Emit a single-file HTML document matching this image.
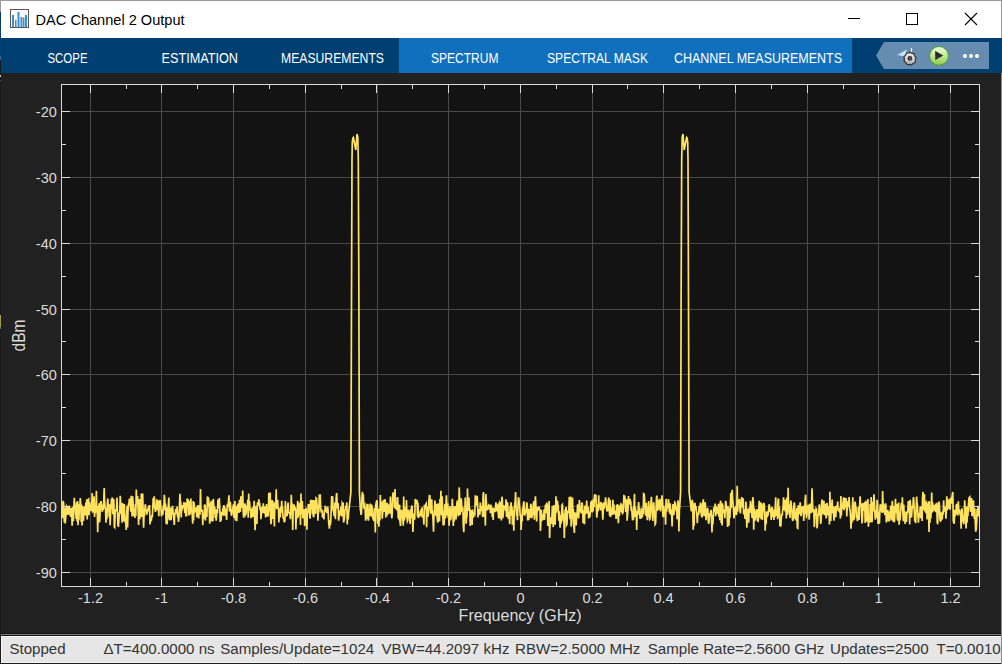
<!DOCTYPE html>
<html><head><meta charset="utf-8"><style>
html,body{margin:0;padding:0;width:1002px;height:664px;overflow:hidden;background:#212121;font-family:"Liberation Sans",sans-serif}
</style></head><body>
<svg width="1002" height="664" viewBox="0 0 1002 664" style="position:absolute;left:0;top:0">
<rect x="0" y="0" width="1002" height="664" fill="#212121"/>
<!-- title bar -->
<rect x="0" y="0" width="1002" height="38" fill="#ffffff"/>
<rect x="0" y="0" width="1002" height="1" fill="#9b9b9b"/>
<!-- icon -->
<rect x="10.5" y="9.5" width="18" height="18" fill="#fafafa" stroke="#5a5a5a" stroke-width="1"/>
<g fill="#3f8fd2"><rect x="12" y="15" width="2" height="12"/><rect x="15" y="20" width="1.5" height="7"/><rect x="17.5" y="12" width="2" height="15"/><rect x="20.5" y="17" width="2" height="10"/><rect x="23" y="17.5" width="1.5" height="9.5"/><rect x="25" y="15" width="2" height="12"/></g>
<text x="35.6" y="24.7" font-family="Liberation Sans" font-size="15" fill="#000" textLength="149" lengthAdjust="spacingAndGlyphs">DAC Channel 2 Output</text>
<!-- window buttons -->
<path d="M848 18.5H860" stroke="#000" stroke-width="1"/>
<rect x="906.5" y="13.5" width="11" height="11" fill="none" stroke="#000" stroke-width="1"/>
<path d="M965 13L977 25M977 13L965 25" stroke="#000" stroke-width="1.1"/>
<!-- toolstrip -->
<rect x="0" y="38" width="1002" height="35" fill="#003f72"/>
<rect x="399" y="38" width="453" height="35" fill="#1170be"/>
<g font-family="Liberation Sans" font-size="14" fill="#ffffff">
<text x="47.5" y="63" textLength="40" lengthAdjust="spacingAndGlyphs">SCOPE</text>
<text x="161.5" y="63" textLength="76.5" lengthAdjust="spacingAndGlyphs">ESTIMATION</text>
<text x="281" y="63" textLength="103" lengthAdjust="spacingAndGlyphs">MEASUREMENTS</text>
<text x="431" y="63" textLength="67.5" lengthAdjust="spacingAndGlyphs">SPECTRUM</text>
<text x="547" y="63" textLength="101" lengthAdjust="spacingAndGlyphs">SPECTRAL MASK</text>
<text x="674" y="63" textLength="168" lengthAdjust="spacingAndGlyphs">CHANNEL MEASUREMENTS</text>
</g>
<!-- toolbar panel -->
<path d="M876 55.5L884 42H989V69H884Z" fill="#668cb0"/>
<!-- gear -->
<defs>
<linearGradient id="gg" x1="0" y1="0" x2="0" y2="1"><stop offset="0" stop-color="#f0f0f0"/><stop offset="1" stop-color="#b0b0b0"/></linearGradient>
<linearGradient id="pg" x1="0" y1="0" x2="0" y2="1"><stop offset="0" stop-color="#eefbe2"/><stop offset="0.45" stop-color="#c8ec9a"/><stop offset="1" stop-color="#8ccc48"/></linearGradient>
<linearGradient id="tg" x1="0" y1="0" x2="0" y2="1"><stop offset="0" stop-color="#1e1e1e"/><stop offset="1" stop-color="#3c3c3c"/></linearGradient>
</defs>
<path d="M897.2 55L906.8 49.6L905 56.4Z" fill="#c4e2f6"/>
<path d="M911.5 48V52" stroke="#eaf4fc" stroke-width="1.2"/>
<g transform="translate(909.9 58.4)">
<path d="M0 -6.2L1.6 -5.2L3.9 -4.8L4.6 -2.6L6.1 -0.8L5.4 1.5L5.5 3.8L3.4 4.8L1.7 6.4L-0.6 5.9L-2.8 6.3L-4 4.3L-5.8 2.9L-5.5 0.6L-6 -1.7L-4.3 -3.2L-3.2 -5.4L-0.9 -5.6Z" fill="url(#gg)" stroke="#333" stroke-width="1.2"/>
<circle r="2.3" fill="#2e2e2e"/><circle r="1" fill="#5d6f82"/>
</g>
<!-- play -->
<g transform="translate(939 55.9)">
<circle r="9.4" fill="url(#pg)" stroke="#4f9a2c" stroke-width="1"/>
<path d="M-3.8 -5L4.3 -0.3L-3.8 4.4Z" fill="url(#tg)"/>
</g>
<g fill="#ffffff"><circle cx="965" cy="56" r="2"/><circle cx="971" cy="56" r="2"/><circle cx="977" cy="56" r="2"/></g>
<!-- axes -->
<rect x="61" y="84" width="919" height="503" fill="#131313"/>
<path d="M90.5 84V586M161.5 84V586M233.5 84V586M305.5 84V586M377.5 84V586M448.5 84V586M520.5 84V586M592.5 84V586M663.5 84V586M735.5 84V586M807.5 84V586M878.5 84V586M950.5 84V586M61 111.5H979M61 177.5H979M61 243.5H979M61 309.5H979M61 374.5H979M61 440.5H979M61 506.5H979M61 572.5H979" stroke="#4a4a4a" stroke-width="1" fill="none"/>
<path d="M61.5 512.3 L62.0 512.5 L62.4 518.1 L62.9 502.7 L63.3 500.9 L63.8 505.7 L64.3 522.5 L64.7 507.8 L65.2 523.4 L65.6 519.5 L66.1 509.4 L66.5 506.4 L67.0 507.5 L67.5 514.9 L67.9 506.1 L68.4 514.3 L68.8 513.4 L69.3 505.5 L69.8 513.1 L70.2 514.5 L70.7 516.9 L71.1 508.0 L71.6 509.2 L72.1 525.8 L72.5 513.5 L73.0 506.8 L73.4 521.1 L73.9 506.2 L74.3 497.8 L74.8 507.4 L75.3 505.0 L75.7 513.4 L76.2 518.8 L76.6 502.3 L77.1 521.4 L77.6 501.1 L78.0 525.2 L78.5 511.0 L78.9 520.3 L79.4 504.1 L79.8 508.3 L80.3 498.1 L80.8 505.0 L81.2 522.1 L81.7 504.7 L82.1 525.4 L82.6 506.7 L83.1 511.7 L83.5 520.9 L84.0 507.7 L84.4 507.3 L84.9 508.6 L85.4 515.1 L85.8 502.6 L86.3 515.7 L86.7 499.3 L87.2 519.4 L87.6 512.7 L88.1 499.7 L88.6 499.2 L89.0 515.1 L89.5 502.1 L89.9 506.3 L90.4 508.4 L90.9 511.2 L91.3 505.7 L91.8 503.3 L92.2 493.0 L92.7 510.8 L93.2 510.0 L93.6 512.4 L94.1 496.2 L94.5 517.1 L95.0 508.1 L95.4 513.2 L95.9 508.4 L96.4 490.7 L96.8 511.6 L97.3 512.2 L97.7 532.2 L98.2 505.9 L98.7 510.2 L99.1 503.2 L99.6 522.5 L100.0 514.5 L100.5 502.7 L101.0 501.2 L101.4 504.5 L101.9 508.6 L102.3 511.8 L102.8 504.8 L103.2 510.3 L103.7 502.3 L104.2 488.0 L104.6 500.3 L105.1 508.1 L105.5 508.5 L106.0 522.7 L106.5 508.1 L106.9 519.3 L107.4 502.5 L107.8 498.6 L108.3 509.9 L108.7 505.1 L109.2 517.1 L109.7 504.2 L110.1 525.2 L110.6 513.8 L111.0 508.0 L111.5 498.7 L112.0 499.8 L112.4 497.5 L112.9 514.3 L113.3 510.0 L113.8 499.1 L114.3 526.9 L114.7 527.4 L115.2 510.5 L115.6 510.3 L116.1 509.3 L116.5 510.0 L117.0 497.5 L117.5 512.5 L117.9 524.7 L118.4 526.9 L118.8 521.5 L119.3 512.5 L119.8 514.3 L120.2 495.7 L120.7 502.7 L121.1 509.9 L121.6 513.4 L122.1 522.8 L122.5 503.1 L123.0 507.8 L123.4 507.7 L123.9 521.5 L124.3 504.0 L124.8 516.0 L125.3 522.8 L125.7 521.0 L126.2 530.0 L126.6 518.3 L127.1 505.7 L127.6 527.4 L128.0 510.8 L128.5 504.2 L128.9 504.1 L129.4 498.6 L129.9 505.4 L130.3 502.4 L130.8 511.6 L131.2 495.8 L131.7 504.3 L132.1 516.5 L132.6 496.2 L133.1 503.4 L133.5 516.1 L134.0 508.3 L134.4 509.9 L134.9 517.9 L135.4 504.0 L135.8 516.0 L136.3 489.6 L136.7 502.4 L137.2 504.3 L137.6 496.0 L138.1 508.5 L138.6 525.0 L139.0 509.8 L139.5 499.1 L139.9 519.3 L140.4 508.9 L140.9 513.0 L141.3 493.5 L141.8 517.1 L142.2 497.5 L142.7 493.4 L143.2 514.1 L143.6 527.6 L144.1 512.8 L144.5 516.0 L145.0 507.0 L145.4 504.2 L145.9 511.2 L146.4 509.5 L146.8 514.6 L147.3 511.3 L147.7 509.9 L148.2 511.1 L148.7 506.5 L149.1 505.9 L149.6 505.9 L150.0 524.4 L150.5 519.4 L151.0 520.5 L151.4 519.9 L151.9 515.0 L152.3 517.1 L152.8 507.4 L153.2 498.0 L153.7 508.3 L154.2 496.4 L154.6 499.9 L155.1 509.5 L155.5 511.9 L156.0 505.0 L156.5 509.7 L156.9 499.2 L157.4 506.0 L157.8 510.4 L158.3 500.6 L158.8 516.1 L159.2 506.1 L159.7 501.4 L160.1 500.0 L160.6 505.0 L161.0 509.1 L161.5 516.4 L162.0 509.5 L162.4 512.5 L162.9 514.7 L163.3 505.2 L163.8 510.5 L164.3 494.8 L164.7 498.6 L165.2 509.7 L165.6 503.4 L166.1 523.7 L166.5 507.3 L167.0 524.4 L167.5 517.9 L167.9 511.5 L168.4 505.6 L168.8 497.6 L169.3 518.8 L169.8 520.3 L170.2 512.7 L170.7 507.5 L171.1 520.3 L171.6 514.1 L172.1 512.2 L172.5 505.8 L173.0 511.2 L173.4 513.4 L173.9 520.0 L174.3 525.0 L174.8 513.1 L175.3 514.4 L175.7 508.8 L176.2 512.1 L176.6 513.4 L177.1 506.5 L177.6 517.3 L178.0 516.3 L178.5 522.0 L178.9 517.8 L179.4 509.3 L179.9 493.8 L180.3 501.0 L180.8 502.6 L181.2 517.4 L181.7 508.3 L182.1 508.8 L182.6 505.2 L183.1 506.7 L183.5 507.2 L184.0 502.2 L184.4 508.2 L184.9 512.9 L185.4 502.6 L185.8 516.5 L186.3 507.4 L186.7 516.3 L187.2 498.4 L187.7 506.9 L188.1 499.3 L188.6 504.1 L189.0 515.4 L189.5 501.1 L189.9 514.6 L190.4 511.6 L190.9 498.5 L191.3 512.1 L191.8 509.9 L192.2 514.8 L192.7 523.7 L193.2 500.9 L193.6 520.5 L194.1 502.4 L194.5 509.5 L195.0 511.3 L195.4 510.8 L195.9 511.3 L196.4 507.2 L196.8 517.3 L197.3 515.1 L197.7 505.0 L198.2 513.5 L198.7 518.5 L199.1 509.3 L199.6 505.3 L200.0 514.8 L200.5 489.1 L201.0 511.3 L201.4 509.2 L201.9 511.9 L202.3 509.8 L202.8 525.2 L203.2 512.8 L203.7 519.0 L204.2 516.6 L204.6 505.2 L205.1 505.4 L205.5 520.6 L206.0 508.3 L206.5 510.6 L206.9 517.0 L207.4 496.4 L207.8 506.9 L208.3 497.4 L208.8 501.3 L209.2 509.0 L209.7 523.7 L210.1 505.3 L210.6 503.8 L211.0 505.8 L211.5 521.5 L212.0 500.4 L212.4 517.4 L212.9 521.4 L213.3 498.9 L213.8 506.4 L214.3 513.8 L214.7 506.5 L215.2 517.9 L215.6 509.2 L216.1 520.6 L216.6 516.1 L217.0 512.1 L217.5 513.1 L217.9 499.6 L218.4 502.1 L218.8 508.3 L219.3 498.0 L219.8 509.0 L220.2 521.9 L220.7 517.2 L221.1 520.6 L221.6 511.8 L222.1 514.9 L222.5 513.3 L223.0 507.6 L223.4 515.8 L223.9 505.0 L224.3 507.8 L224.8 507.8 L225.3 515.0 L225.7 515.9 L226.2 509.3 L226.6 520.0 L227.1 506.8 L227.6 504.0 L228.0 507.0 L228.5 501.6 L228.9 495.4 L229.4 511.4 L229.9 504.4 L230.3 501.9 L230.8 509.0 L231.2 514.2 L231.7 515.8 L232.1 510.8 L232.6 511.4 L233.1 506.4 L233.5 504.3 L234.0 518.0 L234.4 507.5 L234.9 501.0 L235.4 520.5 L235.8 508.3 L236.3 507.6 L236.7 521.1 L237.2 510.8 L237.7 506.7 L238.1 503.6 L238.6 509.3 L239.0 513.0 L239.5 499.8 L239.9 508.9 L240.4 511.8 L240.9 496.4 L241.3 497.9 L241.8 506.2 L242.2 507.8 L242.7 490.4 L243.2 511.0 L243.6 517.8 L244.1 506.1 L244.5 505.1 L245.0 503.5 L245.5 514.8 L245.9 514.0 L246.4 510.2 L246.8 505.5 L247.3 509.0 L247.7 499.8 L248.2 517.7 L248.7 493.4 L249.1 507.4 L249.6 501.4 L250.0 510.6 L250.5 508.7 L251.0 518.2 L251.4 511.7 L251.9 512.6 L252.3 507.3 L252.8 517.1 L253.2 512.1 L253.7 510.7 L254.2 500.8 L254.6 515.0 L255.1 530.1 L255.5 518.5 L256.0 507.3 L256.5 506.1 L256.9 523.9 L257.4 503.2 L257.8 503.0 L258.3 505.5 L258.8 499.4 L259.2 502.0 L259.7 503.7 L260.1 510.1 L260.6 506.8 L261.0 519.1 L261.5 510.1 L262.0 506.8 L262.4 509.7 L262.9 513.1 L263.3 503.4 L263.8 511.4 L264.3 512.2 L264.7 507.8 L265.2 506.5 L265.6 517.4 L266.1 513.5 L266.6 504.0 L267.0 514.3 L267.5 516.7 L267.9 513.9 L268.4 514.5 L268.8 492.7 L269.3 510.2 L269.8 510.3 L270.2 492.6 L270.7 519.7 L271.1 524.1 L271.6 515.8 L272.1 500.0 L272.5 519.1 L273.0 501.4 L273.4 514.3 L273.9 505.8 L274.4 526.4 L274.8 504.3 L275.3 501.9 L275.7 506.9 L276.2 489.2 L276.6 509.2 L277.1 502.8 L277.6 499.9 L278.0 506.6 L278.5 508.6 L278.9 522.5 L279.4 509.7 L279.9 508.3 L280.3 517.5 L280.8 506.8 L281.2 512.6 L281.7 500.9 L282.1 508.9 L282.6 508.3 L283.1 518.5 L283.5 516.8 L284.0 520.8 L284.4 522.4 L284.9 520.3 L285.4 501.0 L285.8 514.8 L286.3 510.3 L286.7 515.5 L287.2 515.2 L287.7 505.4 L288.1 502.5 L288.6 511.5 L289.0 512.8 L289.5 512.7 L289.9 513.8 L290.4 519.1 L290.9 508.1 L291.3 494.8 L291.8 511.2 L292.2 503.5 L292.7 529.9 L293.2 510.1 L293.6 507.4 L294.1 504.4 L294.5 510.7 L295.0 506.8 L295.5 509.6 L295.9 529.5 L296.4 512.9 L296.8 519.0 L297.3 508.0 L297.7 500.9 L298.2 517.4 L298.7 505.4 L299.1 502.9 L299.6 514.9 L300.0 505.0 L300.5 525.1 L301.0 493.5 L301.4 514.1 L301.9 510.1 L302.3 501.0 L302.8 518.2 L303.3 516.8 L303.7 512.1 L304.2 508.9 L304.6 526.1 L305.1 524.2 L305.5 514.0 L306.0 507.9 L306.5 517.8 L306.9 529.7 L307.4 510.8 L307.8 512.8 L308.3 504.7 L308.8 504.8 L309.2 508.7 L309.7 515.6 L310.1 518.7 L310.6 499.9 L311.0 509.1 L311.5 501.2 L312.0 500.1 L312.4 514.4 L312.9 500.1 L313.3 516.2 L313.8 517.2 L314.3 500.4 L314.7 509.0 L315.2 501.1 L315.6 514.0 L316.1 498.1 L316.6 498.6 L317.0 504.6 L317.5 505.9 L317.9 520.8 L318.4 510.0 L318.8 512.5 L319.3 494.5 L319.8 505.4 L320.2 494.4 L320.7 508.5 L321.1 511.0 L321.6 510.2 L322.1 510.4 L322.5 517.0 L323.0 517.0 L323.4 513.4 L323.9 519.4 L324.4 510.3 L324.8 511.9 L325.3 505.7 L325.7 509.2 L326.2 510.9 L326.6 512.2 L327.1 511.9 L327.6 506.7 L328.0 509.3 L328.5 519.5 L328.9 524.4 L329.4 528.7 L329.9 520.0 L330.3 525.1 L330.8 520.3 L331.2 510.5 L331.7 496.0 L332.2 508.0 L332.6 496.3 L333.1 511.2 L333.5 508.7 L334.0 514.9 L334.4 516.4 L334.9 502.6 L335.4 519.3 L335.8 505.8 L336.3 496.0 L336.7 493.1 L337.2 504.6 L337.7 508.8 L338.1 503.1 L338.6 520.7 L339.0 518.0 L339.5 510.2 L339.9 511.8 L340.4 515.5 L340.9 506.5 L341.3 513.3 L341.8 516.3 L342.2 503.0 L342.7 503.9 L343.2 502.4 L343.6 522.6 L344.1 519.8 L344.5 517.8 L345.0 509.9 L345.5 509.1 L345.9 505.6 L346.4 509.5 L346.8 502.4 L347.3 524.5 L347.7 509.8 L348.2 519.4 L348.6 513.0 L350.9 492.0 L351.5 300.0 L352.0 160.0 L352.3 142.0 L352.9 138.2 L353.4 137.5 L355.8 150.0 L357.0 134.0 L357.8 137.0 L358.3 160.0 L358.9 300.0 L359.4 492.0 L360.4 509.8 L360.6 509.8 L361.1 514.8 L361.5 513.2 L362.0 498.0 L362.4 491.7 L362.9 500.7 L363.3 494.4 L363.8 508.6 L364.3 505.7 L364.7 504.8 L365.2 510.4 L365.6 520.7 L366.1 514.5 L366.6 516.5 L367.0 503.8 L367.5 519.2 L367.9 504.0 L368.4 520.6 L368.8 516.3 L369.3 514.0 L369.8 509.3 L370.2 503.6 L370.7 515.5 L371.1 515.7 L371.6 504.6 L372.1 507.6 L372.5 514.8 L373.0 519.3 L373.4 518.3 L373.9 521.0 L374.4 508.0 L374.8 509.7 L375.3 532.6 L375.7 505.0 L376.2 502.7 L376.6 500.9 L377.1 501.0 L377.6 521.6 L378.0 523.8 L378.5 508.6 L378.9 526.8 L379.4 509.9 L379.9 520.6 L380.3 494.9 L380.8 509.1 L381.2 510.5 L381.7 501.4 L382.2 518.8 L382.6 514.2 L383.1 507.4 L383.5 499.7 L384.0 504.3 L384.4 512.0 L384.9 499.2 L385.4 503.0 L385.8 517.6 L386.3 506.1 L386.7 514.1 L387.2 502.9 L387.7 513.7 L388.1 512.9 L388.6 505.4 L389.0 504.5 L389.5 512.2 L390.0 513.5 L390.4 496.6 L390.9 507.7 L391.3 510.9 L391.8 518.5 L392.2 513.9 L392.7 495.4 L393.2 492.5 L393.6 494.8 L394.1 496.8 L394.5 507.6 L395.0 488.9 L395.5 509.0 L395.9 505.1 L396.4 506.2 L396.8 510.4 L397.3 497.2 L397.7 498.0 L398.2 517.5 L398.7 518.4 L399.1 507.2 L399.6 504.7 L400.0 521.2 L400.5 525.9 L401.0 517.4 L401.4 509.7 L401.9 511.8 L402.3 513.7 L402.8 518.9 L403.3 525.8 L403.7 496.5 L404.2 517.1 L404.6 518.4 L405.1 516.5 L405.5 507.4 L406.0 516.7 L406.5 500.0 L406.9 516.3 L407.4 521.3 L407.8 520.4 L408.3 509.6 L408.8 512.2 L409.2 518.2 L409.7 516.7 L410.1 524.0 L410.6 509.3 L411.1 518.0 L411.5 507.6 L412.0 505.5 L412.4 515.3 L412.9 531.9 L413.3 521.3 L413.8 514.9 L414.3 513.5 L414.7 519.7 L415.2 499.0 L415.6 500.9 L416.1 502.3 L416.6 503.7 L417.0 499.7 L417.5 516.6 L417.9 502.5 L418.4 518.0 L418.9 515.9 L419.3 514.4 L419.8 516.5 L420.2 512.2 L420.7 510.8 L421.1 509.4 L421.6 516.2 L422.1 507.2 L422.5 517.6 L423.0 515.9 L423.4 516.2 L423.9 524.8 L424.4 504.7 L424.8 507.4 L425.3 508.1 L425.7 504.6 L426.2 503.7 L426.6 527.3 L427.1 506.2 L427.6 515.0 L428.0 516.7 L428.5 512.6 L428.9 500.8 L429.4 495.7 L429.9 495.9 L430.3 508.5 L430.8 512.7 L431.2 512.8 L431.7 499.2 L432.2 514.1 L432.6 513.3 L433.1 521.5 L433.5 531.7 L434.0 515.3 L434.4 512.7 L434.9 500.6 L435.4 508.9 L435.8 515.8 L436.3 503.8 L436.7 512.7 L437.2 518.0 L437.7 522.7 L438.1 503.4 L438.6 516.3 L439.0 516.8 L439.5 521.3 L440.0 498.7 L440.4 514.4 L440.9 490.7 L441.3 511.8 L441.8 515.6 L442.2 496.2 L442.7 513.6 L443.2 525.4 L443.6 520.6 L444.1 525.2 L444.5 510.3 L445.0 504.1 L445.5 518.5 L445.9 505.3 L446.4 495.3 L446.8 502.7 L447.3 515.5 L447.8 503.6 L448.2 517.8 L448.7 514.6 L449.1 525.7 L449.6 509.6 L450.0 506.0 L450.5 520.3 L451.0 518.3 L451.4 512.7 L451.9 509.5 L452.3 498.8 L452.8 508.8 L453.3 526.1 L453.7 506.8 L454.2 521.5 L454.6 511.1 L455.1 506.0 L455.5 516.8 L456.0 519.4 L456.5 510.6 L456.9 503.0 L457.4 500.5 L457.8 508.0 L458.3 516.3 L458.8 513.2 L459.2 487.4 L459.7 501.2 L460.1 515.0 L460.6 510.2 L461.1 498.4 L461.5 501.4 L462.0 510.2 L462.4 509.8 L462.9 509.0 L463.3 526.3 L463.8 532.2 L464.3 512.2 L464.7 518.2 L465.2 497.6 L465.6 509.2 L466.1 523.6 L466.6 517.2 L467.0 516.7 L467.5 488.5 L467.9 507.7 L468.4 510.9 L468.9 497.5 L469.3 508.2 L469.8 508.7 L470.2 526.0 L470.7 510.3 L471.1 512.2 L471.6 516.0 L472.1 525.0 L472.5 509.4 L473.0 512.6 L473.4 517.6 L473.9 513.1 L474.4 513.3 L474.8 514.0 L475.3 495.2 L475.7 506.0 L476.2 500.4 L476.7 504.8 L477.1 495.8 L477.6 503.5 L478.0 517.5 L478.5 509.0 L478.9 514.8 L479.4 512.0 L479.9 514.7 L480.3 502.5 L480.8 511.1 L481.2 507.9 L481.7 507.3 L482.2 506.2 L482.6 517.1 L483.1 494.8 L483.5 492.1 L484.0 510.3 L484.4 516.7 L484.9 511.3 L485.4 525.6 L485.8 493.9 L486.3 501.7 L486.7 506.2 L487.2 510.2 L487.7 508.4 L488.1 507.2 L488.6 509.3 L489.0 505.4 L489.5 506.0 L490.0 504.8 L490.4 513.3 L490.9 504.5 L491.3 510.4 L491.8 507.0 L492.2 516.9 L492.7 511.8 L493.2 519.9 L493.6 508.1 L494.1 509.2 L494.5 511.4 L495.0 511.4 L495.5 508.5 L495.9 502.4 L496.4 511.5 L496.8 504.0 L497.3 506.2 L497.8 504.6 L498.2 513.3 L498.7 518.5 L499.1 502.4 L499.6 518.4 L500.0 502.5 L500.5 503.3 L501.0 514.7 L501.4 520.5 L501.9 496.7 L502.3 499.2 L502.8 518.2 L503.3 512.9 L503.7 505.1 L504.2 507.8 L504.6 509.3 L505.1 506.1 L505.6 510.9 L506.0 499.3 L506.5 516.9 L506.9 512.2 L507.4 502.1 L507.8 505.2 L508.3 518.9 L508.8 512.2 L509.2 514.0 L509.7 524.1 L510.1 506.0 L510.6 509.8 L511.1 502.2 L511.5 515.7 L512.0 506.5 L512.4 524.8 L512.9 511.7 L513.3 510.2 L513.8 530.7 L514.3 508.0 L514.7 504.7 L515.2 501.1 L515.6 492.0 L516.1 508.0 L516.6 515.8 L517.0 514.8 L517.5 520.1 L517.9 508.1 L518.4 497.2 L518.9 498.8 L519.3 503.9 L519.8 509.0 L520.2 515.3 L520.7 515.3 L521.1 530.0 L521.6 519.3 L522.1 521.6 L522.5 507.5 L523.0 515.0 L523.4 504.4 L523.9 501.4 L524.4 510.8 L524.8 515.7 L525.3 508.9 L525.7 512.8 L526.2 512.4 L526.7 502.4 L527.1 503.9 L527.6 520.4 L528.0 508.3 L528.5 519.9 L528.9 518.9 L529.4 514.0 L529.9 509.1 L530.3 517.6 L530.8 503.8 L531.2 505.5 L531.7 518.2 L532.2 515.8 L532.6 513.9 L533.1 508.2 L533.5 503.3 L534.0 501.1 L534.4 519.8 L534.9 506.2 L535.4 496.2 L535.8 503.0 L536.3 514.9 L536.7 521.4 L537.2 507.1 L537.7 510.4 L538.1 509.7 L538.6 507.8 L539.0 506.6 L539.5 509.5 L540.0 509.8 L540.4 531.0 L540.9 521.5 L541.3 509.7 L541.8 517.5 L542.2 520.8 L542.7 514.3 L543.2 519.7 L543.6 517.8 L544.1 509.3 L544.5 520.0 L545.0 510.1 L545.5 504.7 L545.9 513.3 L546.4 505.6 L546.8 502.6 L547.3 505.3 L547.8 526.1 L548.2 511.2 L548.7 520.1 L549.1 501.1 L549.6 537.9 L550.0 525.4 L550.5 517.3 L551.0 519.3 L551.4 523.9 L551.9 517.8 L552.3 506.2 L552.8 518.7 L553.3 527.1 L553.7 505.0 L554.2 520.7 L554.6 505.5 L555.1 524.8 L555.6 509.9 L556.0 496.4 L556.5 512.8 L556.9 502.2 L557.4 500.5 L557.8 504.3 L558.3 507.3 L558.8 520.7 L559.2 511.3 L559.7 519.4 L560.1 527.7 L560.6 515.4 L561.1 523.6 L561.5 516.9 L562.0 505.0 L562.4 504.5 L562.9 512.8 L563.3 521.5 L563.8 513.5 L564.3 537.9 L564.7 522.4 L565.2 509.3 L565.6 510.6 L566.1 507.0 L566.6 525.0 L567.0 524.3 L567.5 512.1 L567.9 510.7 L568.4 513.2 L568.9 508.7 L569.3 496.9 L569.8 515.5 L570.2 519.2 L570.7 496.5 L571.1 526.5 L571.6 523.6 L572.1 512.9 L572.5 497.5 L573.0 515.4 L573.4 508.9 L573.9 527.1 L574.4 533.0 L574.8 513.9 L575.3 512.7 L575.7 516.7 L576.2 525.5 L576.7 512.5 L577.1 513.8 L577.6 504.4 L578.0 513.1 L578.5 518.5 L578.9 514.0 L579.4 500.0 L579.9 511.9 L580.3 507.7 L580.8 509.2 L581.2 513.5 L581.7 503.2 L582.2 503.3 L582.6 506.6 L583.1 523.1 L583.5 510.1 L584.0 517.0 L584.5 524.3 L584.9 505.5 L585.4 513.6 L585.8 513.1 L586.3 510.9 L586.7 500.6 L587.2 511.5 L587.7 513.5 L588.1 506.8 L588.6 518.5 L589.0 511.8 L589.5 517.5 L590.0 516.1 L590.4 512.2 L590.9 501.8 L591.3 511.8 L591.8 500.3 L592.2 512.3 L592.7 509.0 L593.2 509.6 L593.6 498.6 L594.1 507.2 L594.5 495.7 L595.0 494.2 L595.5 501.2 L595.9 494.8 L596.4 509.6 L596.8 517.8 L597.3 511.2 L597.8 504.4 L598.2 511.1 L598.7 495.3 L599.1 507.7 L599.6 506.1 L600.0 505.2 L600.5 510.2 L601.0 501.8 L601.4 510.5 L601.9 503.4 L602.3 509.3 L602.8 519.8 L603.3 510.6 L603.7 502.5 L604.2 508.6 L604.6 502.8 L605.1 502.7 L605.6 497.4 L606.0 502.5 L606.5 507.8 L606.9 511.5 L607.4 510.1 L607.8 510.2 L608.3 501.8 L608.8 497.6 L609.2 509.5 L609.7 516.3 L610.1 499.7 L610.6 517.1 L611.1 507.6 L611.5 509.7 L612.0 514.9 L612.4 511.8 L612.9 499.7 L613.4 514.7 L613.8 504.2 L614.3 513.9 L614.7 512.4 L615.2 514.1 L615.6 510.5 L616.1 519.0 L616.6 505.1 L617.0 514.2 L617.5 504.0 L617.9 515.8 L618.4 523.2 L618.9 505.6 L619.3 516.0 L619.8 509.4 L620.2 504.8 L620.7 512.3 L621.1 504.0 L621.6 504.4 L622.1 512.1 L622.5 513.4 L623.0 512.7 L623.4 508.4 L623.9 495.7 L624.4 495.9 L624.8 496.8 L625.3 499.8 L625.7 512.0 L626.2 510.2 L626.7 499.2 L627.1 520.8 L627.6 514.7 L628.0 510.1 L628.5 496.0 L628.9 504.0 L629.4 504.0 L629.9 498.8 L630.3 500.9 L630.8 502.2 L631.2 510.9 L631.7 506.9 L632.2 516.0 L632.6 520.4 L633.1 510.8 L633.5 519.8 L634.0 506.1 L634.5 493.9 L634.9 517.0 L635.4 507.4 L635.8 512.5 L636.3 512.4 L636.7 529.9 L637.2 511.0 L637.7 514.8 L638.1 510.8 L638.6 502.1 L639.0 507.5 L639.5 512.2 L640.0 518.8 L640.4 515.8 L640.9 518.8 L641.3 507.9 L641.8 512.3 L642.3 517.4 L642.7 510.2 L643.2 513.9 L643.6 493.7 L644.1 494.0 L644.5 497.6 L645.0 507.8 L645.5 515.5 L645.9 514.5 L646.4 502.8 L646.8 513.8 L647.3 520.1 L647.8 507.0 L648.2 514.0 L648.7 501.1 L649.1 516.2 L649.6 519.5 L650.0 519.0 L650.5 507.7 L651.0 502.4 L651.4 496.9 L651.9 508.1 L652.3 515.6 L652.8 520.9 L653.3 509.8 L653.7 502.3 L654.2 511.2 L654.6 512.4 L655.1 524.4 L655.6 523.6 L656.0 511.6 L656.5 497.4 L656.9 495.6 L657.4 511.0 L657.8 499.8 L658.3 507.5 L658.8 508.9 L659.2 508.7 L659.7 498.8 L660.1 506.1 L660.6 511.3 L661.1 501.6 L661.5 501.8 L662.0 495.2 L662.4 501.2 L662.9 515.6 L663.4 517.2 L663.8 505.5 L664.3 511.4 L664.7 511.1 L665.2 513.6 L665.6 524.8 L666.1 498.9 L666.6 511.6 L667.0 507.5 L667.5 504.7 L667.9 508.5 L668.4 499.0 L668.9 504.3 L669.3 511.7 L669.8 513.1 L670.2 503.3 L670.7 514.6 L671.2 509.6 L671.6 512.5 L672.1 526.5 L672.5 512.0 L673.0 504.0 L673.4 512.5 L673.9 515.0 L674.4 506.5 L674.8 502.3 L675.3 502.9 L675.7 505.2 L676.2 511.2 L676.7 506.3 L677.1 519.3 L677.6 516.6 L678.0 500.2 L678.5 508.9 L678.9 531.6 L679.4 508.4 L679.6 508.4 L680.6 492.0 L681.1 300.0 L681.7 160.0 L682.2 137.0 L683.0 134.0 L684.2 150.0 L686.6 137.5 L687.1 138.2 L687.7 142.0 L688.0 160.0 L688.5 300.0 L689.1 492.0 L691.4 511.4 L691.8 503.3 L692.3 499.8 L692.7 504.0 L693.2 529.8 L693.6 521.3 L694.1 525.7 L694.5 503.7 L695.0 503.7 L695.5 508.8 L695.9 506.2 L696.4 510.8 L696.8 514.0 L697.3 523.2 L697.8 515.2 L698.2 513.6 L698.7 513.8 L699.1 505.9 L699.6 512.7 L700.1 507.4 L700.5 502.6 L701.0 505.1 L701.4 516.0 L701.9 516.6 L702.3 515.1 L702.8 504.0 L703.3 499.3 L703.7 513.6 L704.2 516.2 L704.6 512.9 L705.1 502.2 L705.6 506.9 L706.0 520.2 L706.5 514.1 L706.9 509.0 L707.4 510.4 L707.8 508.0 L708.3 521.1 L708.8 523.8 L709.2 519.1 L709.7 513.2 L710.1 515.6 L710.6 511.8 L711.1 509.9 L711.5 518.6 L712.0 532.4 L712.4 515.1 L712.9 524.5 L713.4 513.6 L713.8 507.4 L714.3 512.0 L714.7 508.6 L715.2 503.5 L715.6 516.1 L716.1 506.3 L716.6 508.8 L717.0 514.0 L717.5 512.2 L717.9 512.1 L718.4 503.8 L718.9 516.7 L719.3 511.3 L719.8 520.3 L720.2 503.8 L720.7 500.7 L721.2 523.2 L721.6 504.2 L722.1 525.4 L722.5 503.3 L723.0 509.3 L723.4 511.5 L723.9 510.4 L724.4 510.6 L724.8 518.1 L725.3 509.2 L725.7 500.9 L726.2 504.4 L726.7 509.5 L727.1 511.5 L727.6 526.9 L728.0 506.0 L728.5 516.5 L729.0 525.6 L729.4 508.0 L729.9 517.9 L730.3 507.6 L730.8 493.1 L731.2 508.1 L731.7 493.1 L732.2 489.8 L732.6 498.9 L733.1 503.8 L733.5 510.0 L734.0 518.5 L734.5 514.4 L734.9 508.2 L735.4 507.5 L735.8 509.8 L736.3 515.0 L736.7 513.4 L737.2 485.7 L737.7 511.7 L738.1 502.3 L738.6 501.9 L739.0 501.8 L739.5 499.0 L740.0 510.3 L740.4 513.5 L740.9 502.2 L741.3 501.8 L741.8 497.1 L742.3 506.5 L742.7 507.5 L743.2 498.2 L743.6 514.3 L744.1 509.0 L744.5 512.3 L745.0 518.1 L745.5 518.3 L745.9 501.5 L746.4 513.2 L746.8 527.7 L747.3 517.1 L747.8 513.3 L748.2 508.3 L748.7 522.8 L749.1 510.8 L749.6 512.9 L750.1 507.7 L750.5 500.9 L751.0 505.5 L751.4 510.9 L751.9 515.6 L752.3 518.1 L752.8 497.0 L753.3 501.5 L753.7 529.8 L754.2 511.1 L754.6 510.0 L755.1 511.7 L755.6 520.8 L756.0 514.7 L756.5 517.8 L756.9 509.2 L757.4 510.8 L757.9 522.0 L758.3 520.2 L758.8 510.1 L759.2 500.8 L759.7 517.7 L760.1 508.6 L760.6 502.2 L761.1 519.1 L761.5 503.3 L762.0 507.2 L762.4 520.0 L762.9 509.5 L763.4 506.0 L763.8 502.9 L764.3 505.5 L764.7 512.2 L765.2 530.8 L765.6 515.6 L766.1 524.3 L766.6 511.5 L767.0 513.3 L767.5 516.1 L767.9 515.5 L768.4 511.6 L768.9 506.5 L769.3 504.2 L769.8 510.0 L770.2 512.1 L770.7 508.1 L771.2 519.9 L771.6 508.7 L772.1 507.0 L772.5 511.1 L773.0 517.1 L773.4 512.7 L773.9 519.9 L774.4 508.9 L774.8 517.5 L775.3 506.5 L775.7 497.3 L776.2 516.0 L776.7 512.1 L777.1 510.1 L777.6 519.2 L778.0 500.9 L778.5 498.4 L779.0 517.0 L779.4 507.1 L779.9 526.2 L780.3 521.2 L780.8 526.6 L781.2 519.3 L781.7 513.8 L782.2 515.7 L782.6 510.4 L783.1 507.0 L783.5 497.4 L784.0 506.1 L784.5 510.3 L784.9 499.7 L785.4 511.8 L785.8 499.9 L786.3 518.4 L786.8 497.6 L787.2 506.0 L787.7 514.9 L788.1 487.7 L788.6 508.1 L789.0 512.3 L789.5 504.6 L790.0 518.0 L790.4 505.3 L790.9 500.6 L791.3 505.7 L791.8 509.4 L792.3 518.2 L792.7 521.0 L793.2 519.1 L793.6 510.7 L794.1 502.5 L794.5 503.4 L795.0 518.1 L795.5 518.8 L795.9 514.1 L796.4 514.2 L796.8 508.0 L797.3 527.9 L797.8 528.3 L798.2 505.2 L798.7 511.2 L799.1 508.6 L799.6 514.4 L800.1 502.4 L800.5 506.9 L801.0 516.2 L801.4 513.4 L801.9 509.3 L802.3 506.4 L802.8 507.7 L803.3 507.2 L803.7 520.9 L804.2 513.3 L804.6 513.3 L805.1 499.9 L805.6 494.7 L806.0 509.8 L806.5 516.7 L806.9 516.0 L807.4 505.8 L807.9 507.9 L808.3 504.5 L808.8 512.2 L809.2 519.7 L809.7 510.7 L810.1 503.5 L810.6 511.2 L811.1 513.0 L811.5 509.7 L812.0 488.2 L812.4 499.4 L812.9 511.6 L813.4 511.9 L813.8 508.7 L814.3 527.1 L814.7 522.3 L815.2 509.7 L815.7 513.2 L816.1 508.5 L816.6 509.2 L817.0 528.3 L817.5 524.4 L817.9 514.7 L818.4 515.9 L818.9 511.1 L819.3 504.3 L819.8 510.1 L820.2 513.5 L820.7 524.0 L821.2 519.8 L821.6 502.5 L822.1 499.7 L822.5 501.3 L823.0 513.1 L823.4 512.8 L823.9 500.7 L824.4 515.1 L824.8 503.8 L825.3 506.2 L825.7 505.9 L826.2 518.5 L826.7 503.9 L827.1 503.0 L827.6 515.5 L828.0 507.0 L828.5 507.1 L829.0 506.8 L829.4 524.5 L829.9 491.7 L830.3 519.6 L830.8 521.0 L831.2 508.1 L831.7 504.3 L832.2 499.5 L832.6 513.2 L833.1 506.2 L833.5 513.0 L834.0 520.6 L834.5 511.1 L834.9 508.4 L835.4 506.1 L835.8 517.2 L836.3 507.3 L836.8 505.7 L837.2 507.7 L837.7 501.6 L838.1 511.0 L838.6 508.7 L839.0 511.0 L839.5 511.7 L840.0 507.5 L840.4 518.6 L840.9 495.9 L841.3 515.6 L841.8 506.9 L842.3 508.9 L842.7 505.4 L843.2 501.0 L843.6 497.4 L844.1 510.1 L844.6 497.8 L845.0 507.8 L845.5 500.9 L845.9 498.0 L846.4 501.7 L846.8 516.5 L847.3 505.7 L847.8 505.9 L848.2 501.1 L848.7 506.2 L849.1 497.0 L849.6 509.0 L850.1 509.9 L850.5 516.2 L851.0 528.7 L851.4 518.7 L851.9 522.7 L852.3 509.7 L852.8 497.3 L853.3 511.9 L853.7 520.4 L854.2 518.3 L854.6 505.5 L855.1 501.5 L855.6 506.3 L856.0 507.9 L856.5 518.3 L856.9 515.5 L857.4 521.2 L857.9 517.8 L858.3 506.9 L858.8 513.5 L859.2 519.9 L859.7 504.2 L860.1 496.2 L860.6 506.5 L861.1 503.4 L861.5 506.9 L862.0 523.5 L862.4 520.1 L862.9 503.4 L863.4 504.8 L863.8 507.9 L864.3 510.9 L864.7 501.9 L865.2 522.9 L865.7 512.1 L866.1 502.2 L866.6 502.9 L867.0 521.7 L867.5 502.6 L867.9 499.0 L868.4 526.7 L868.9 519.5 L869.3 516.3 L869.8 522.4 L870.2 504.0 L870.7 522.6 L871.2 497.1 L871.6 511.8 L872.1 522.2 L872.5 501.7 L873.0 508.6 L873.5 511.4 L873.9 494.2 L874.4 500.7 L874.8 510.5 L875.3 519.7 L875.7 515.2 L876.2 510.1 L876.7 517.9 L877.1 499.8 L877.6 504.8 L878.0 523.9 L878.5 515.4 L879.0 511.7 L879.4 523.7 L879.9 510.6 L880.3 504.3 L880.8 506.2 L881.2 510.3 L881.7 511.5 L882.2 512.7 L882.6 491.0 L883.1 504.7 L883.5 504.5 L884.0 512.8 L884.5 505.6 L884.9 515.2 L885.4 504.6 L885.8 503.6 L886.3 522.6 L886.8 520.5 L887.2 512.8 L887.7 509.8 L888.1 520.9 L888.6 511.6 L889.0 521.4 L889.5 517.9 L890.0 515.3 L890.4 510.5 L890.9 505.6 L891.3 520.4 L891.8 511.8 L892.3 500.8 L892.7 508.3 L893.2 521.7 L893.6 506.1 L894.1 522.3 L894.6 520.3 L895.0 510.9 L895.5 498.7 L895.9 513.1 L896.4 508.7 L896.8 503.7 L897.3 518.8 L897.8 520.4 L898.2 507.3 L898.7 502.6 L899.1 524.8 L899.6 518.1 L900.1 520.2 L900.5 513.9 L901.0 507.6 L901.4 503.0 L901.9 509.3 L902.4 497.2 L902.8 510.0 L903.3 521.3 L903.7 504.6 L904.2 513.9 L904.6 512.5 L905.1 523.9 L905.6 514.4 L906.0 511.5 L906.5 521.9 L906.9 511.5 L907.4 513.3 L907.9 509.1 L908.3 501.0 L908.8 506.6 L909.2 503.4 L909.7 524.6 L910.1 499.7 L910.6 505.9 L911.1 516.2 L911.5 517.5 L912.0 509.4 L912.4 506.8 L912.9 507.0 L913.4 497.0 L913.8 499.7 L914.3 511.8 L914.7 520.1 L915.2 519.6 L915.7 523.1 L916.1 510.3 L916.6 496.5 L917.0 501.9 L917.5 506.5 L917.9 514.4 L918.4 522.8 L918.9 515.1 L919.3 514.3 L919.8 516.5 L920.2 506.8 L920.7 518.3 L921.2 507.2 L921.6 507.3 L922.1 521.0 L922.5 498.8 L923.0 491.7 L923.5 510.0 L923.9 505.5 L924.4 494.1 L924.8 510.4 L925.3 511.2 L925.7 504.6 L926.2 502.7 L926.7 504.4 L927.1 519.4 L927.6 508.6 L928.0 506.8 L928.5 501.4 L929.0 532.1 L929.4 501.3 L929.9 523.0 L930.3 509.0 L930.8 518.4 L931.3 509.4 L931.7 492.4 L932.2 512.4 L932.6 502.2 L933.1 510.2 L933.5 505.2 L934.0 509.2 L934.5 508.0 L934.9 510.9 L935.4 504.3 L935.8 512.2 L936.3 503.8 L936.8 503.6 L937.2 521.9 L937.7 524.2 L938.1 511.4 L938.6 504.9 L939.0 501.7 L939.5 505.8 L940.0 520.1 L940.4 520.6 L940.9 515.2 L941.3 512.2 L941.8 519.1 L942.3 518.4 L942.7 511.3 L943.2 514.5 L943.6 500.4 L944.1 511.6 L944.6 508.5 L945.0 508.5 L945.5 506.6 L945.9 518.8 L946.4 508.4 L946.8 496.3 L947.3 506.1 L947.8 508.3 L948.2 507.2 L948.7 499.3 L949.1 503.0 L949.6 508.0 L950.1 509.6 L950.5 497.8 L951.0 502.3 L951.4 503.4 L951.9 497.3 L952.4 494.3 L952.8 491.9 L953.3 520.9 L953.7 522.4 L954.2 523.7 L954.6 509.7 L955.1 516.4 L955.6 511.8 L956.0 510.5 L956.5 503.7 L956.9 513.4 L957.4 514.3 L957.9 514.6 L958.3 501.4 L958.8 511.3 L959.2 513.1 L959.7 509.4 L960.2 515.2 L960.6 511.4 L961.1 528.8 L961.5 514.1 L962.0 508.4 L962.4 515.1 L962.9 521.0 L963.4 522.0 L963.8 524.1 L964.3 515.8 L964.7 500.3 L965.2 511.3 L965.7 519.4 L966.1 528.5 L966.6 506.5 L967.0 522.7 L967.5 513.5 L967.9 515.9 L968.4 505.0 L968.9 499.0 L969.3 497.5 L969.8 497.0 L970.2 510.1 L970.7 511.8 L971.2 506.4 L971.6 498.1 L972.1 516.3 L972.5 510.6 L973.0 509.8 L973.5 500.3 L973.9 514.6 L974.4 518.8 L974.8 508.3 L975.3 522.5 L975.7 531.7 L976.2 529.2 L976.7 522.5 L977.1 509.0 L977.6 515.0 L978.0 505.9 L978.5 516.5" stroke="#ffe35f" stroke-width="1.7" fill="none" stroke-linejoin="miter"/>
<path d="M90.5 84v9M90.5 587v-9M126.5 84v5M126.5 587v-5M161.5 84v9M161.5 587v-9M197.5 84v5M197.5 587v-5M233.5 84v9M233.5 587v-9M269.5 84v5M269.5 587v-5M305.5 84v9M305.5 587v-9M341.5 84v5M341.5 587v-5M376.5 84v9M376.5 587v-9M412.5 84v5M412.5 587v-5M448.5 84v9M448.5 587v-9M484.5 84v5M484.5 587v-5M520.5 84v9M520.5 587v-9M556.5 84v5M556.5 587v-5M592.5 84v9M592.5 587v-9M627.5 84v5M627.5 587v-5M663.5 84v9M663.5 587v-9M699.5 84v5M699.5 587v-5M735.5 84v9M735.5 587v-9M771.5 84v5M771.5 587v-5M807.5 84v9M807.5 587v-9M843.5 84v5M843.5 587v-5M878.5 84v9M878.5 587v-9M914.5 84v5M914.5 587v-5M950.5 84v9M950.5 587v-9M61 111.5h9M980 111.5h-9M61 144.5h5M980 144.5h-5M61 177.5h9M980 177.5h-9M61 210.5h5M980 210.5h-5M61 243.5h9M980 243.5h-9M61 276.5h5M980 276.5h-5M61 309.5h9M980 309.5h-9M61 341.5h5M980 341.5h-5M61 374.5h9M980 374.5h-9M61 407.5h5M980 407.5h-5M61 440.5h9M980 440.5h-9M61 473.5h5M980 473.5h-5M61 506.5h9M980 506.5h-9M61 539.5h5M980 539.5h-5M61 572.5h9M980 572.5h-9" stroke="#dadada" stroke-width="1" fill="none"/>
<rect x="61.5" y="84.5" width="918" height="502" fill="none" stroke="#dadada" stroke-width="1"/>
<g font-family="Liberation Sans" font-size="14.5" fill="#dcdcdc"><text x="90.5" y="603" text-anchor="middle">-1.2</text><text x="161.5" y="603" text-anchor="middle">-1</text><text x="233.5" y="603" text-anchor="middle">-0.8</text><text x="305.5" y="603" text-anchor="middle">-0.6</text><text x="377.5" y="603" text-anchor="middle">-0.4</text><text x="448.5" y="603" text-anchor="middle">-0.2</text><text x="520.5" y="603" text-anchor="middle">0</text><text x="592.5" y="603" text-anchor="middle">0.2</text><text x="663.5" y="603" text-anchor="middle">0.4</text><text x="735.5" y="603" text-anchor="middle">0.6</text><text x="807.5" y="603" text-anchor="middle">0.8</text><text x="878.5" y="603" text-anchor="middle">1</text><text x="950.5" y="603" text-anchor="middle">1.2</text><text x="56.8" y="116.8" text-anchor="end">-20</text><text x="56.8" y="182.8" text-anchor="end">-30</text><text x="56.8" y="248.8" text-anchor="end">-40</text><text x="56.8" y="314.8" text-anchor="end">-50</text><text x="56.8" y="379.8" text-anchor="end">-60</text><text x="56.8" y="445.8" text-anchor="end">-70</text><text x="56.8" y="511.8" text-anchor="end">-80</text><text x="56.8" y="577.8" text-anchor="end">-90</text></g>
<text x="458.6" y="620.5" font-family="Liberation Sans" font-size="16" fill="#dcdcdc" textLength="123" lengthAdjust="spacingAndGlyphs">Frequency (GHz)</text>
<text transform="translate(24.7 351.5) rotate(-90)" font-family="Liberation Sans" font-size="17.5" fill="#dcdcdc" textLength="32" lengthAdjust="spacingAndGlyphs">dBm</text>
<rect x="0" y="633" width="1002" height="1" fill="#141414"/>
<rect x="0" y="634" width="1002" height="1" fill="#7a7a7a"/>
<rect x="0" y="635" width="1002" height="1" fill="#151515"/>
<rect x="0" y="636" width="1002" height="1" fill="#f8f8f8"/>
<rect x="0" y="637" width="1002" height="25" fill="#e6e6e6"/>
<rect x="0" y="662" width="1002" height="1" fill="#f6f6f6"/>
<rect x="0" y="663" width="1002" height="1" fill="#1e1e1e"/>
<rect x="1" y="636" width="1" height="27" fill="#f8f8f8"/>
<g font-family="Liberation Sans" font-size="15.1" fill="#333333">
<text x="9.4" y="654">Stopped</text>
<text x="103.4" y="654">ΔT=400.0000 ns</text>
<text x="220.2" y="654">Samples/Update=1024</text>
<text x="381.5" y="654">VBW=44.2097 kHz</text>
<text x="515" y="654">RBW=2.5000 MHz</text>
<text x="647.8" y="654">Sample Rate=2.5600 GHz</text>
<text x="830" y="654">Updates=2500</text>
<text x="936.5" y="654">T=0.0010</text>
</g>
<rect x="0" y="0" width="1" height="12" fill="#9b9b9b"/>
<rect x="0" y="12" width="1" height="48" fill="#0a3e6e"/>
<rect x="0" y="60" width="1" height="604" fill="#1a1a1a"/>
<rect x="0" y="56" width="1" height="4" fill="#3a6a95"/>
<rect x="0" y="75" width="1" height="2" fill="#c8c8c8"/>
<rect x="0" y="80" width="1" height="1" fill="#555"/>
<rect x="0" y="315" width="1" height="12" fill="#a89a48"/>
<rect x="0" y="327" width="1" height="2" fill="#5a6878"/>
<rect x="1001" y="0" width="1" height="38" fill="#9b9b9b"/>
<rect x="1001" y="73" width="1" height="591" fill="#8a8a8a"/>
</svg>
</body></html>
